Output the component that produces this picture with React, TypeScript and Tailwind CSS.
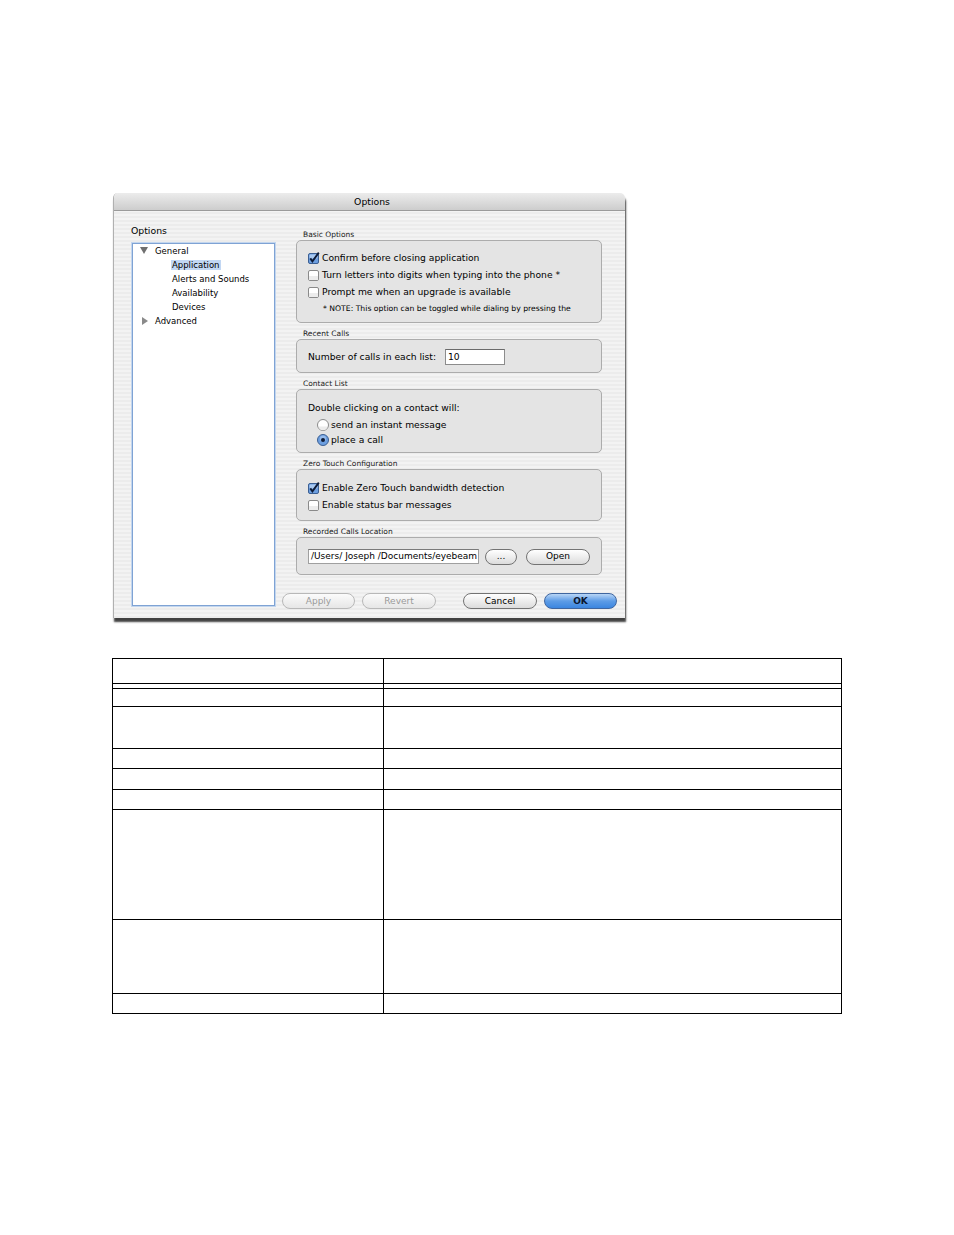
import React from 'react';

const ui = "font-['DejaVu_Sans','Lucida_Grande',sans-serif] text-black";

function CheckBox({ on }: { on?: boolean }) {
  return (
    <svg width="12" height="12" viewBox="0 0 12 12" className="shrink-0">
      {on ? (
        <>
          <rect x="0.5" y="1.5" width="10" height="10" rx="1.5" fill="#6d9fe0" stroke="#3b5f93" />
          <rect x="1.5" y="2.5" width="8" height="4" rx="1" fill="#a9c9f1" />
          <path d="M2.3 6.4 L4.4 9.3 L10.8 0.6" fill="none" stroke="#0d1a36" strokeWidth="1.9" />
        </>
      ) : (
        <>
          <rect x="0.5" y="1.5" width="10" height="10" rx="1.5" fill="#ffffff" stroke="#8a8a8a" />
          <rect x="1" y="7" width="9" height="4" fill="#ececec" />
        </>
      )}
    </svg>
  );
}

function Radio({ on }: { on?: boolean }) {
  return (
    <svg width="12" height="12" viewBox="0 0 12 12" className="shrink-0">
      {on ? (
        <>
          <circle cx="6" cy="6" r="5.5" fill="#6d9fe0" stroke="#3b5f93" />
          <circle cx="6" cy="4.5" r="3" fill="#a9c9f1" opacity="0.7" />
          <circle cx="6" cy="6" r="2" fill="#0d1a36" />
        </>
      ) : (
        <>
          <circle cx="6" cy="6" r="5.5" fill="#ffffff" stroke="#8a8a8a" />
          <path d="M1.5 7.5 A4.6 4.6 0 0 0 10.5 7.5 Z" fill="#ececec" />
        </>
      )}
    </svg>
  );
}

function Pill({ label, w, disabled, primary }: { label: string; w: string; disabled?: boolean; primary?: boolean }) {
  const base = 'h-[16px] rounded-full border flex items-center justify-center text-[9px] leading-none';
  const look = primary
    ? 'border-[#3f66a0] bg-linear-to-b from-[#b9d6f6] via-[#5d9ce6] to-[#3b86e0] text-[#0b1630] font-bold'
    : disabled
      ? 'border-[#b8b8b8] bg-linear-to-b from-[#fbfbfb] to-[#e6e6e6] text-[#9a9a9a]'
      : 'border-[#737373] bg-linear-to-b from-[#ffffff] to-[#dcdcdc] text-black';
  return <div className={`${base} ${look} ${w}`}>{label}</div>;
}

function GroupLabel({ children, first }: { children: React.ReactNode; first?: boolean }) {
  return (
    <div className={`${first ? '' : 'mt-[5px]'} h-[11px] pl-[21px] text-[7.5px] leading-[11px] text-[#1a1a1a]`}>
      {children}
    </div>
  );
}

const box = 'ml-[14px] w-[306px] rounded-[5px] border border-[#acacac] bg-[#e4e4e4]';

function CheckRow({ on, text }: { on?: boolean; text: string }) {
  return (
    <div className="flex h-[17px] items-center gap-[2px] pl-[11px]">
      <CheckBox on={on} />
      <span className="text-[9.2px] leading-none">{text}</span>
    </div>
  );
}

function TreeItem({ text, depth, arrow, selected }: { text: string; depth: number; arrow?: 'down' | 'right'; selected?: boolean }) {
  return (
    <div className="relative flex h-[14px] items-center text-[8.5px] leading-none">
      {arrow === 'down' && (
        <svg width="8" height="7" viewBox="0 0 8 7" className="absolute left-[7px] top-[3px]">
          <path d="M0 0 H8 L4 7 Z" fill="#6f6f6f" />
        </svg>
      )}
      {arrow === 'right' && (
        <svg width="6" height="8" viewBox="0 0 6 8" className="absolute left-[9px] top-[3px]">
          <path d="M0 0 L6 4 L0 8 Z" fill="#8a8a8a" />
        </svg>
      )}
      <span
        className={`${depth === 0 ? 'ml-[21px]' : 'ml-[38px]'} ${
          selected ? 'bg-[#c2d7f3] px-[1px] py-[1px]' : 'px-[1px]'
        }`}
      >
        {text}
      </span>
    </div>
  );
}

export default function App() {
  const rows = [
    'h-[24px]',
    'h-[5px]',
    'h-[18px]',
    'h-[42px]',
    'h-[20px]',
    'h-[21px]',
    'h-[20px]',
    'h-[110px]',
    'h-[74px]',
    'h-[20px]',
  ];

  return (
    <div className={`min-h-[1235px] w-[954px] bg-white ${ui}`}>
      <div className="pl-[113px] pt-[193px]">
        {/* dialog window */}
        <div className="w-[512px] overflow-hidden rounded-t-[5px] border-l border-[#b0b0b0] shadow-[1px_4px_2px_rgba(0,0,0,0.75)]">
          <div className="flex h-[18px] items-center justify-center border-b border-[#9a9a9a] bg-linear-to-b from-[#ececec] to-[#cdcdcd] pl-[5px] text-[9.3px]">
            Options
          </div>
          <div className="flex h-[407px] bg-[repeating-linear-gradient(0deg,#ececec_0px,#ececec_2px,#f3f3f3_2px,#f3f3f3_4px)]">
            {/* left column */}
            <div className="w-[168px] pl-[17px] pt-[14px]">
              <div className="h-[12px] text-[9.3px] leading-[12px]">Options</div>
              <div className="ml-[1px] mt-[6px] h-[363px] w-[143px] border border-[#7fa3d4] bg-white shadow-[0_0_0_1px_#c3d6ee]">
                <TreeItem text="General" depth={0} arrow="down" />
                <TreeItem text="Application" depth={1} selected />
                <TreeItem text="Alerts and Sounds" depth={1} />
                <TreeItem text="Availability" depth={1} />
                <TreeItem text="Devices" depth={1} />
                <TreeItem text="Advanced" depth={0} arrow="right" />
              </div>
            </div>

            {/* right column */}
            <div className="w-[335px] pt-[18px]">
              <GroupLabel first>Basic Options</GroupLabel>
              <div className={`${box} h-[83px] pt-[8px]`}>
                <CheckRow on text="Confirm before closing application" />
                <CheckRow text="Turn letters into digits when typing into the phone *" />
                <CheckRow text="Prompt me when an upgrade is available" />
                <div className="flex h-[16px] items-center pl-[26px] pt-[2px] text-[7.7px] leading-none">
                  * NOTE: This option can be toggled while dialing by pressing the
                </div>
              </div>

              <GroupLabel>Recent Calls</GroupLabel>
              <div className={`${box} flex h-[34px] items-center pl-[11px] pt-[1px]`}>
                <span className="w-[137px] text-[9.2px] leading-none">Number of calls in each list:</span>
                <div className="flex h-[16px] w-[60px] items-center border border-[#8c8c8c] border-t-[#6a6a6a] bg-white pl-[2px] text-[9.2px] leading-none">
                  10
                </div>
              </div>

              <GroupLabel>Contact List</GroupLabel>
              <div className={`${box} h-[64px] pt-[11px]`}>
                <div className="flex h-[14px] items-center pl-[11px] text-[9.2px] leading-none">
                  Double clicking on a contact will:
                </div>
                <div className="mt-[2px] flex h-[15px] items-center gap-[2px] pl-[20px] text-[9.2px] leading-none">
                  <Radio />
                  <span>send an instant message</span>
                </div>
                <div className="flex h-[15px] items-center gap-[2px] pl-[20px] text-[9.2px] leading-none">
                  <Radio on />
                  <span>place a call</span>
                </div>
              </div>

              <GroupLabel>Zero Touch Configuration</GroupLabel>
              <div className={`${box} h-[52px] pt-[9px]`}>
                <CheckRow on text="Enable Zero Touch bandwidth detection" />
                <CheckRow text="Enable status bar messages" />
              </div>

              <GroupLabel>Recorded Calls Location</GroupLabel>
              <div className={`${box} flex h-[38px] items-center pl-[11px] pt-[1px]`}>
                <div className="flex h-[15px] w-[171px] items-center overflow-hidden whitespace-nowrap border border-[#a0a0a0] border-t-[#7a7a7a] bg-white pl-[2px] text-[9px] leading-none">
                  /Users/ Joseph /Documents/eyebeam
                </div>
                <div className="ml-[6px]">
                  <Pill label="..." w="w-[32px]" />
                </div>
                <div className="ml-[9px]">
                  <Pill label="Open" w="w-[64px]" />
                </div>
              </div>

              <div className="mt-[18px] flex">
                <Pill label="Apply" w="w-[73px]" disabled />
                <div className="ml-[7px]">
                  <Pill label="Revert" w="w-[74px]" disabled />
                </div>
                <div className="ml-[27px]">
                  <Pill label="Cancel" w="w-[74px]" />
                </div>
                <div className="ml-[7px]">
                  <Pill label="OK" w="w-[73px]" primary />
                </div>
              </div>
            </div>
          </div>
        </div>
      </div>

      {/* empty reference table */}
      <div className="ml-[112px] mt-[40px] w-[730px] border border-black">
        {rows.map((h, i) => (
          <div key={i} className={`flex ${h} ${i === 0 ? '' : 'border-t border-black'}`}>
            <div className="w-[271px] border-r border-black" />
            <div className="flex-1" />
          </div>
        ))}
      </div>
    </div>
  );
}
